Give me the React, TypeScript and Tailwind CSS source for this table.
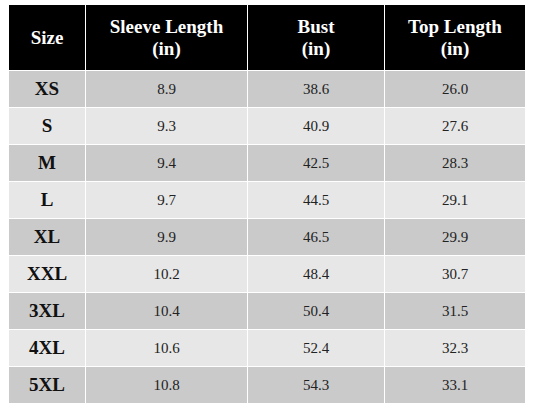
const rows = [
  ["XS", "8.9", "38.6", "26.0"],
  ["S", "9.3", "40.9", "27.6"],
  ["M", "9.4", "42.5", "28.3"],
  ["L", "9.7", "44.5", "29.1"],
  ["XL", "9.9", "46.5", "29.9"],
  ["XXL", "10.2", "48.4", "30.7"],
  ["3XL", "10.4", "50.4", "31.5"],
  ["4XL", "10.6", "52.4", "32.3"],
  ["5XL", "10.8", "54.3", "33.1"],
];

const headers = [["Size"], ["Sleeve Length", "(in)"], ["Bust", "(in)"], ["Top Length", "(in)"]];

export default function App() {
  return (
    <div className="w-[533px] h-[412px] bg-white pl-[9px] pt-[5px] [font-family:'Liberation_Serif',serif]">
      <div className="grid w-[516px] grid-cols-[76px_161px_136px_140px] gap-px bg-white">
        {headers.map((h, i) => (
          <div
            key={i}
            className="flex h-[65px] flex-col items-center justify-center bg-black text-[19px] font-bold leading-[22px] text-white"
          >
            {h.map((line) => (
              <span key={line}>{line}</span>
            ))}
          </div>
        ))}
        {rows.map((r, ri) =>
          r.map((cell, ci) => (
            <div
              key={ri + "-" + ci}
              className={
                "flex h-[36px] items-center justify-center " +
                (ri % 2 === 0 ? "bg-[#cacaca] " : "bg-[#e7e7e7] ") +
                (ci === 0 ? "text-[19px] font-bold text-[#111]" : "text-[15px] text-[#222]")
              }
            >
              {cell}
            </div>
          ))
        )}
      </div>
    </div>
  );
}
